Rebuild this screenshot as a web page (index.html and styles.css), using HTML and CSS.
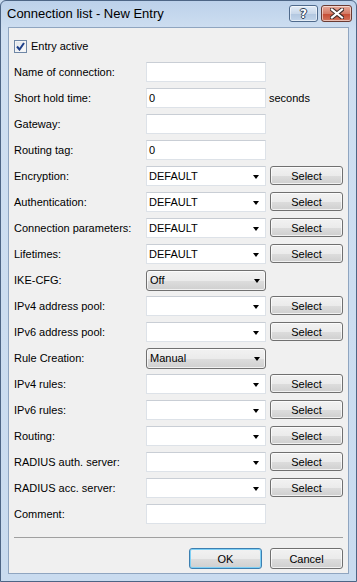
FILE: index.html
```html
<!DOCTYPE html>
<html lang="en">

<head>
    <meta charset="UTF-8">
    <meta name="viewport" content="width=device-width, initial-scale=1.0">
    <title>Connection list - New Entry</title>
    <link rel="stylesheet" href="styles.css">
</head>

<body>
    <div class="window">
        <!-- Title bar -->
        <div class="titlebar">
            <span class="title">Connection list - New Entry</span>
            <div class="caption-buttons">
                <button class="cap-btn help"><span>?</span></button>
                <button class="cap-btn close">
                    <svg width="14" height="11" viewBox="0 0 14 11">
                        <path d="M2 1.5 L12 9.5 M12 1.5 L2 9.5" stroke="#3b2a28" stroke-width="4.2" stroke-linecap="square"/>
                        <path d="M2 1.5 L12 9.5 M12 1.5 L2 9.5" stroke="#fff" stroke-width="2.2" stroke-linecap="square"/>
                    </svg>
                </button>
            </div>
        </div>

        <!-- Dialog body -->
        <div class="client">
            <label class="check-row">
                <span class="checkbox">
                    <svg width="9" height="9" viewBox="0 0 9 9">
                        <path d="M1 4.5 L3.5 7.5 L8 1" fill="none" stroke="#1d3f8a" stroke-width="2"/>
                    </svg>
                </span>
                Entry active
            </label>

            <div class="form">
                <span class="label">Name of connection:</span>
                <div class="field"></div>
                <span></span>

                <span class="label">Short hold time:</span>
                <div class="field">0</div>
                <span class="unit">seconds</span>

                <span class="label">Gateway:</span>
                <div class="field"></div>
                <span></span>

                <span class="label">Routing tag:</span>
                <div class="field">0</div>
                <span></span>

                <span class="label">Encryption:</span>
                <div class="field combo">DEFAULT<i class="arrow"></i></div>
                <button class="btn">Select</button>

                <span class="label">Authentication:</span>
                <div class="field combo">DEFAULT<i class="arrow"></i></div>
                <button class="btn">Select</button>

                <span class="label">Connection parameters:</span>
                <div class="field combo">DEFAULT<i class="arrow"></i></div>
                <button class="btn">Select</button>

                <span class="label">Lifetimes:</span>
                <div class="field combo">DEFAULT<i class="arrow"></i></div>
                <button class="btn">Select</button>

                <span class="label">IKE-CFG:</span>
                <div class="dropdown">Off<i class="arrow"></i></div>
                <span></span>

                <span class="label">IPv4 address pool:</span>
                <div class="field combo"><i class="arrow"></i></div>
                <button class="btn">Select</button>

                <span class="label">IPv6 address pool:</span>
                <div class="field combo"><i class="arrow"></i></div>
                <button class="btn">Select</button>

                <span class="label">Rule Creation:</span>
                <div class="dropdown">Manual<i class="arrow"></i></div>
                <span></span>

                <span class="label">IPv4 rules:</span>
                <div class="field combo"><i class="arrow"></i></div>
                <button class="btn">Select</button>

                <span class="label">IPv6 rules:</span>
                <div class="field combo"><i class="arrow"></i></div>
                <button class="btn">Select</button>

                <span class="label">Routing:</span>
                <div class="field combo"><i class="arrow"></i></div>
                <button class="btn">Select</button>

                <span class="label">RADIUS auth. server:</span>
                <div class="field combo"><i class="arrow"></i></div>
                <button class="btn">Select</button>

                <span class="label">RADIUS acc. server:</span>
                <div class="field combo"><i class="arrow"></i></div>
                <button class="btn">Select</button>

                <span class="label">Comment:</span>
                <div class="field"></div>
                <span></span>
            </div>

            <div class="separator"></div>

            <div class="actions">
                <button class="btn btn-wide default">OK</button>
                <button class="btn btn-wide">Cancel</button>
            </div>
        </div>
    </div>
</body>

</html>
```

FILE: styles.css
```css
html,
body {
    margin: 0;
    padding: 0;
    background: #c9dbef;
}

body {
    font-family: 'Liberation Sans', Tahoma, sans-serif;
    font-size: 11px;
    color: #000;
}

.window {
    box-sizing: border-box;
    width: 357px;
    height: 582px;
    border: 1px solid #4d6585;
    border-radius: 6px 6px 0 0;
    padding: 0 7px 7px;
    background: linear-gradient(#bcd1ea, #cfdff1 30px, #c9dbef);
    display: flex;
    flex-direction: column;
}

/* Title bar */
.titlebar {
    height: 26px;
    display: flex;
    align-items: flex-start;
    justify-content: space-between;
}

.title {
    font-size: 13px;
    line-height: 16px;
    margin-top: 5px;
    margin-left: -1px;
}

.caption-buttons {
    display: flex;
    gap: 3px;
    margin-top: 4px;
    margin-right: -3px;
}

.cap-btn {
    height: 17px;
    padding: 0;
    border: 1px solid #4f6a8c;
    border-radius: 3px;
    display: flex;
    align-items: center;
    justify-content: center;
    box-shadow: inset 0 0 0 1px rgba(255, 255, 255, 0.55);
}

.help {
    width: 29px;
    background: linear-gradient(#e3ecf7, #c9d8ea 50%, #b1c6df 51%, #c3d5ea);
}

.help span {
    font-family: 'DejaVu Sans', sans-serif;
    font-weight: bold;
    font-size: 12px;
    line-height: 12px;
    color: #fff;
    text-shadow: 1px 0 #2c3e55, -1px 0 #2c3e55, 0 1px #2c3e55, 0 -1px #2c3e55;
}

.close {
    width: 31px;
    border-color: #6a3b33;
    background: linear-gradient(#e6a99a, #d47b66 50%, #c54a32 51%, #d2735b);
}

/* Client area */
.client {
    flex: 1;
    background: #f0f0f0;
    border: 1px solid #8fa5c0;
    padding: 12px 5px 0;
}

.check-row {
    display: flex;
    align-items: center;
    gap: 4px;
    height: 13px;
    line-height: 13px;
}

.checkbox {
    box-sizing: border-box;
    width: 13px;
    height: 13px;
    border: 1px solid #6f87a6;
    background: linear-gradient(135deg, #dfe4ea, #fbfbfb);
    box-shadow: inset 0 0 0 1px #f4f4f4;
    display: flex;
    align-items: center;
    justify-content: center;
}

.form {
    margin-top: 9px;
    display: grid;
    grid-template-columns: 128px 120px 73px;
    column-gap: 4px;
    row-gap: 6px;
    grid-auto-rows: 20px;
    align-items: center;
}

.label,
.unit {
    line-height: 20px;
    white-space: nowrap;
}

.unit {
    margin-left: -1px;
}

.field {
    box-sizing: border-box;
    height: 20px;
    background: #fff;
    border: 1px solid #dde2e8;
    border-top-color: #c9ced5;
    padding-left: 2px;
    line-height: 18px;
    position: relative;
}

.arrow {
    position: absolute;
    right: 6px;
    top: 8px;
    width: 0;
    height: 0;
    border-left: 3.5px solid transparent;
    border-right: 3.5px solid transparent;
    border-top: 4px solid #000;
}

.dropdown {
    box-sizing: border-box;
    height: 21px;
    border: 1px solid #707070;
    border-radius: 3px;
    padding-left: 3px;
    line-height: 19px;
    position: relative;
    background: linear-gradient(#f2f2f2, #ebebeb 50%, #dddddd 51%, #cfcfcf);
    box-shadow: inset 0 0 0 1px rgba(255, 255, 255, 0.7);
}

.dropdown .arrow {
    right: 5px;
}

.btn {
    box-sizing: border-box;
    height: 19px;
    padding: 0;
    font-family: inherit;
    font-size: 11px;
    color: #000;
    border: 1px solid #707070;
    border-radius: 3px;
    background: linear-gradient(#f2f2f2, #ebebeb 50%, #dddddd 51%, #cfcfcf);
    box-shadow: inset 0 0 0 1px rgba(255, 255, 255, 0.7);
    align-self: start;
}

.separator {
    margin-top: 13px;
    height: 1px;
    background: #a0a0a0;
}

.actions {
    margin-top: 10px;
    display: flex;
    justify-content: flex-end;
    gap: 8px;
}

.btn-wide {
    width: 73px;
    height: 21px;
}

.default {
    border-color: #3c7fb1;
    box-shadow: inset 0 0 0 1px #7fd0f5;
}
```
